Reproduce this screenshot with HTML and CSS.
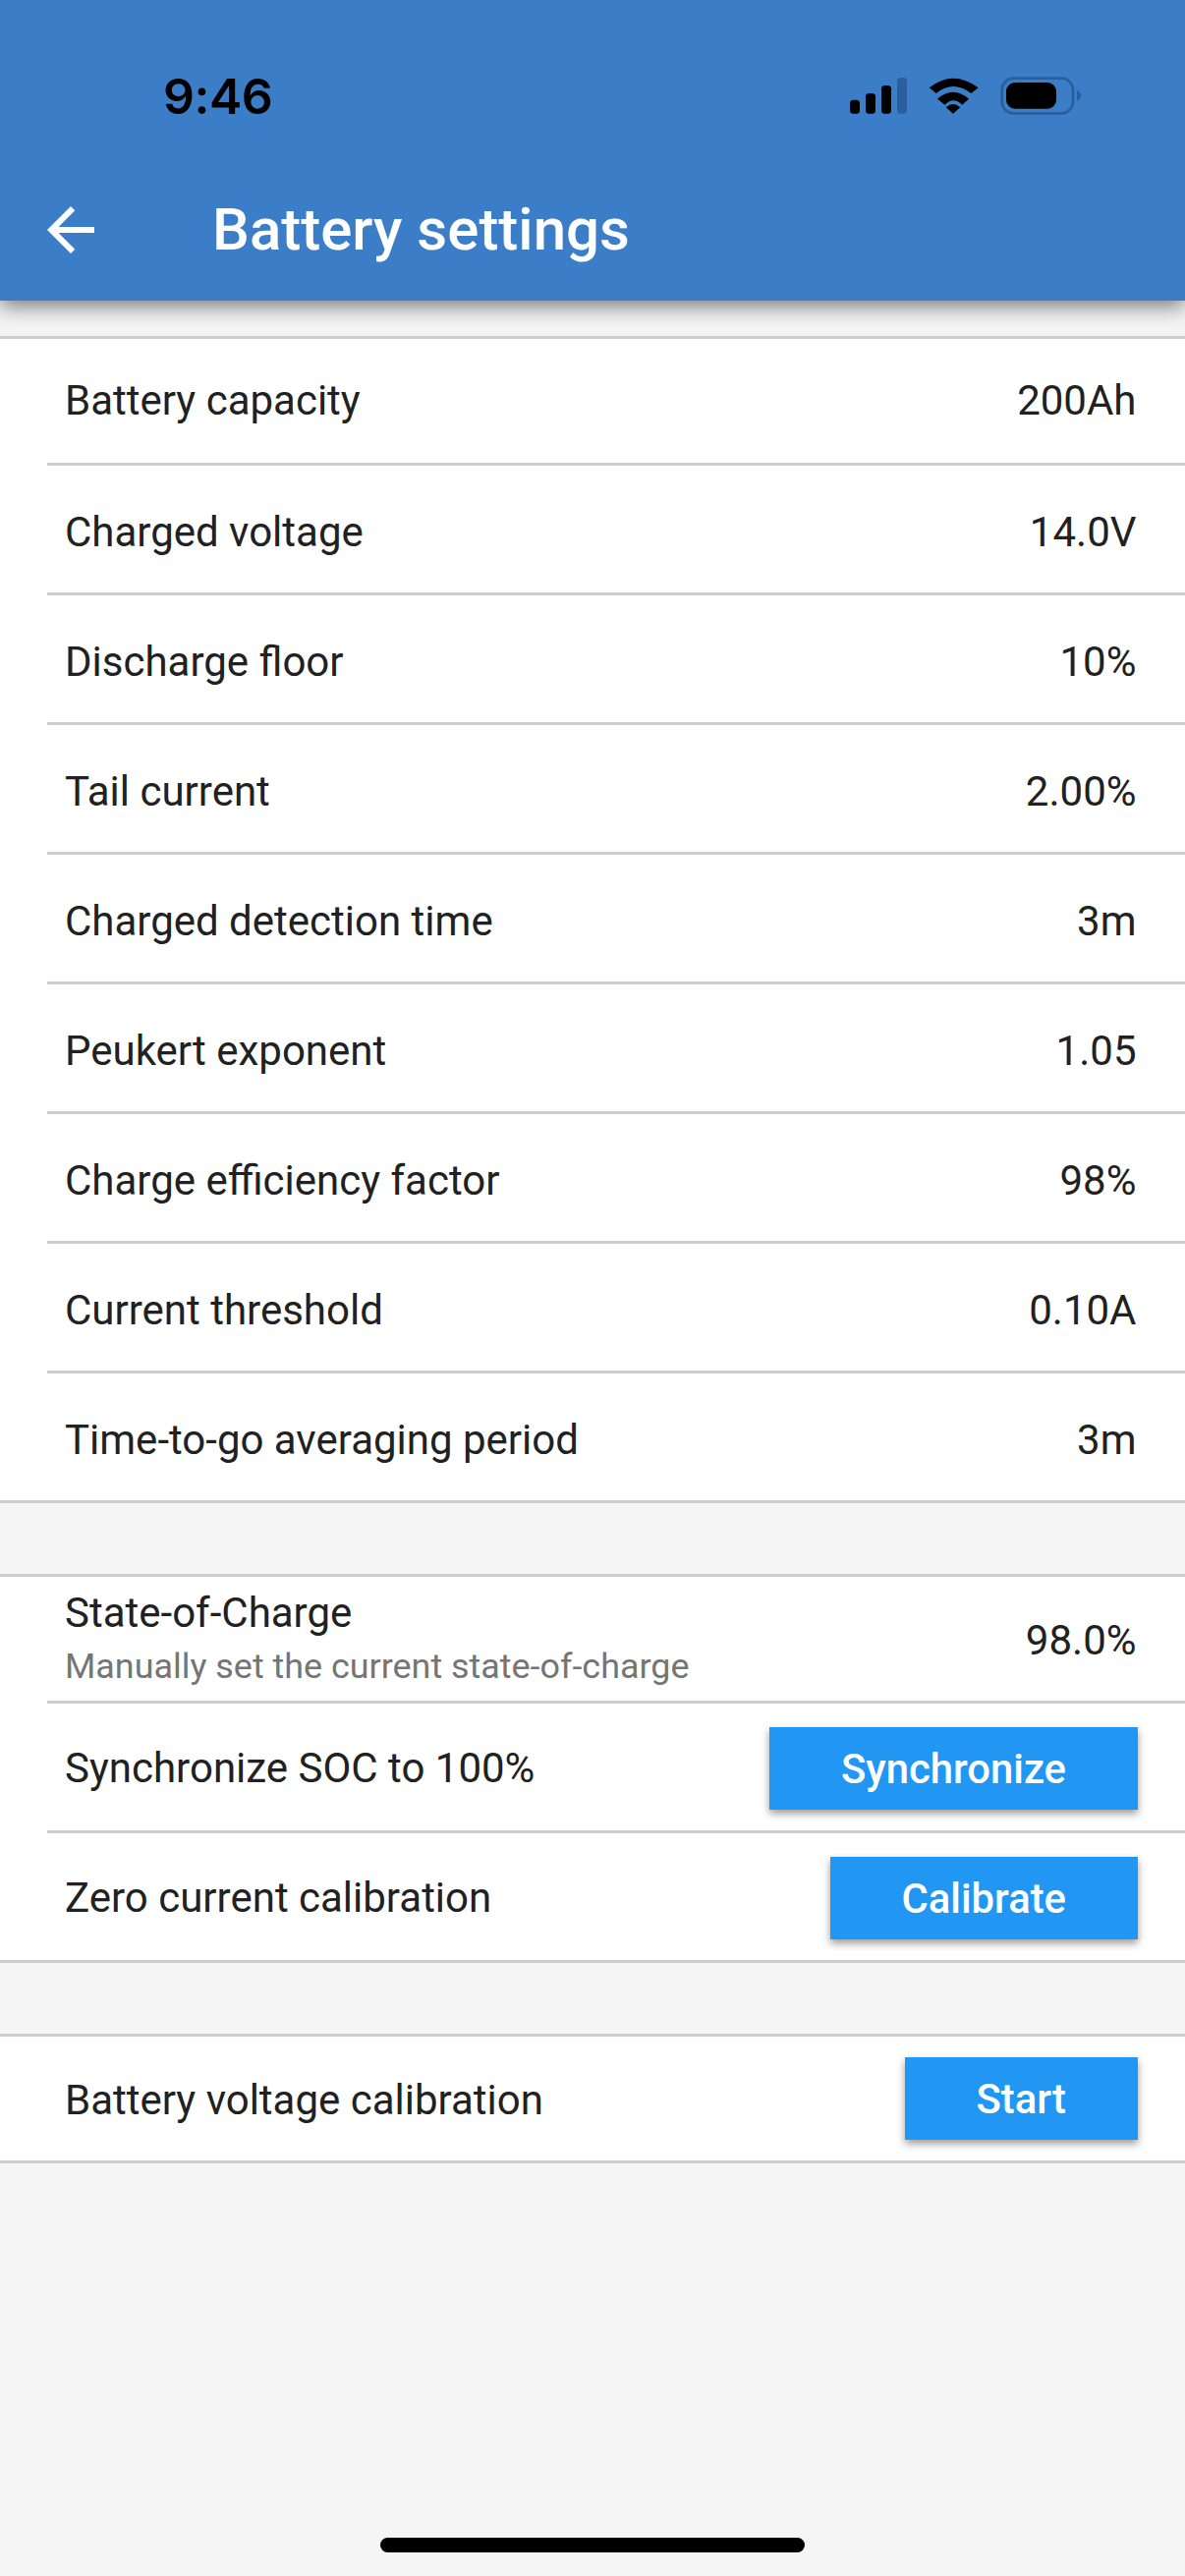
FILE: index.html
```html
<!DOCTYPE html>
<html lang="en">
<head>
<meta charset="utf-8">
<title>Battery settings</title>
<link rel="stylesheet" href="styles.css">
</head>
<body>
<header class="appbar">
  <div class="status">
    <span class="time">9:46</span>
    <svg class="status-icons" viewBox="0 0 242 40" width="242" height="40" aria-hidden="true">
      <rect x="5" y="23.700" width="10" height="14" rx="3.500" fill="#000"/>
      <rect x="21" y="17" width="10" height="20.700" rx="3.500" fill="#000"/>
      <rect x="37" y="9" width="10" height="28.700" rx="3.500" fill="#000"/>
      <rect x="53" y="1" width="10" height="36.700" rx="3.500" fill="#2a5f9e"/>
      <path d="M85.700 11.300Q110 -8 135.700 11.300L128.300 17Q110 3 92.700 17Z" fill="#000"/>
      <path d="M94 22.700Q110 9 126 22.700L119.300 28.700Q110 20 101.700 28.700Z" fill="#000"/>
      <path d="M102.700 31.300Q110 24.500 117.300 31.300L110 37.700Z" fill="#000"/>
      <rect x="159.700" y="1.700" width="72.300" height="35.700" rx="12" fill="none" stroke="#2a5f9e" stroke-width="2.800"/>
      <rect x="164" y="6" width="51" height="26.700" rx="9" fill="#000"/>
      <path d="M236 13.700C239 14.500 240 17 240 19.200C240 21.400 239 24 236 24.700Z" fill="#2a5f9e"/>
    </svg>
  </div>
  <div class="toolbar">
    <svg class="back" viewBox="0 0 24 24" width="72" height="72" aria-hidden="true"><path d="M20 11H7.830l5.590-5.590L12 4l-8 8 8 8 1.410-1.410L7.830 13H20v-2z" fill="#fff"/></svg>
    <h1 class="title">Battery settings</h1>
  </div>
</header>

<main class="content">
  <section class="group">
    <div class="row"><span class="label">Battery capacity</span><span class="value">200Ah</span></div>
    <div class="row"><span class="label">Charged voltage</span><span class="value">14.0V</span></div>
    <div class="row"><span class="label">Discharge floor</span><span class="value">10%</span></div>
    <div class="row"><span class="label">Tail current</span><span class="value">2.00%</span></div>
    <div class="row"><span class="label">Charged detection time</span><span class="value">3m</span></div>
    <div class="row"><span class="label">Peukert exponent</span><span class="value">1.05</span></div>
    <div class="row"><span class="label">Charge efficiency factor</span><span class="value">98%</span></div>
    <div class="row"><span class="label">Current threshold</span><span class="value">0.10A</span></div>
    <div class="row"><span class="label">Time-to-go averaging period</span><span class="value">3m</span></div>
  </section>

  <section class="group">
    <div class="row">
      <div class="stack">
        <span class="label">State-of-Charge</span>
        <span class="sub">Manually set the current state-of-charge</span>
      </div>
      <span class="value">98.0%</span>
    </div>
    <div class="row"><span class="label">Synchronize SOC to 100%</span><button class="btn" type="button">Synchronize</button></div>
    <div class="row"><span class="label">Zero current calibration</span><button class="btn" type="button">Calibrate</button></div>
  </section>

  <section class="group">
    <div class="row"><span class="label">Battery voltage calibration</span><button class="btn" type="button">Start</button></div>
  </section>
</main>

<div class="home-indicator"></div>
</body>
</html>
```

FILE: styles.css
```css
* { box-sizing: border-box; }

html, body { margin: 0; padding: 0; }

body {
  width: 1206px;
  height: 2622px;
  overflow: hidden;
  position: relative;
  background: #f5f5f5;
  font-family: Roboto, "Liberation Sans", sans-serif;
  color: #212121;
}

.appbar {
  position: relative;
  z-index: 1;
  height: 306px;
  background: #3b7dc7;
  box-shadow: 0 6px 20px rgba(0, 0, 0, 0.5);
  display: flex;
  flex-direction: column;
}

.status {
  display: flex;
  justify-content: space-between;
  align-items: center;
  height: 40px;
  margin-top: 78px;
  padding: 0 104px 0 166px;
}

.time {
  font-family: Inter, "Liberation Sans", sans-serif;
  font-size: 50px;
  font-weight: 600;
  line-height: 40px;
  letter-spacing: -0.5px;
  color: #000;
}

.status-icons { display: block; }

.toolbar {
  display: flex;
  align-items: center;
  margin-top: 80px;
  padding-left: 36px;
}

.back { display: block; }

.title {
  margin: 0 0 0 108px;
  font-size: 60px;
  font-weight: 500;
  line-height: 72px;
  color: #fff;
}

.content {
  display: flex;
  flex-direction: column;
  gap: 72px;
  padding-top: 36px;
}

.group {
  background: #fff;
  border-top: 3px solid #cdcdcd;
  border-bottom: 3px solid #cdcdcd;
}

.row {
  height: 132px;
  margin-left: 48px;
  padding: 3px 48px 0 18px;
  display: flex;
  justify-content: space-between;
  align-items: center;
  border-bottom: 3px solid #cdcdcd;
}

.row:first-child { height: 129px; }

.row:last-child {
  height: 129px;
  border-bottom: 0;
}

.row:only-child { height: 126px; }

.row:only-child .btn { margin-top: -3px; }

.group:first-child .row { padding-top: 6px; }

.group:first-child .row:first-child { padding-top: 0; }

.label {
  font-size: 42px;
  line-height: 50px;
}

.value {
  margin-right: 1.5px;
  font-size: 42px;
  line-height: 50px;
}

.stack {
  display: flex;
  flex-direction: column;
  padding-bottom: 3px;
}

.sub {
  margin-top: 6px;
  font-size: 35.9px;
  line-height: 46px;
  color: #757575;
}

.btn {
  height: 84px;
  padding: 0 73px;
  margin: 0;
  border: 0;
  background: #2196f3;
  color: #fff;
  font-family: inherit;
  font-size: 41.8px;
  font-weight: 500;
  box-shadow: 0 4px 8px rgba(0, 0, 0, 0.4);
}

.home-indicator {
  position: absolute;
  left: 387px;
  bottom: 24px;
  width: 432px;
  height: 15px;
  border-radius: 8px;
  background: #000;
}
```
